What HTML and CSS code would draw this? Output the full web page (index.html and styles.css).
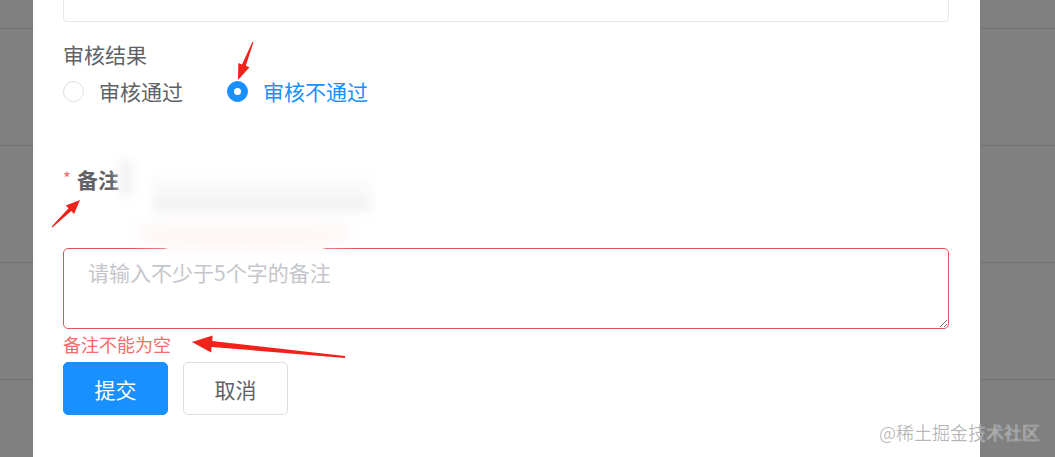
FILE: index.html
```html
<!DOCTYPE html>
<html lang="zh-CN">
<head>
<meta charset="utf-8">
<title>审核</title>
<link rel="stylesheet" href="styles.css">
</head>
<body>
  <div class="table">
    <div class="row row-first"></div>
    <div class="row"></div>
    <div class="row"></div>
    <div class="row"></div>
  </div>

  <div class="dialog">
    <div class="top-box"></div>

    <div class="field-label">审核结果</div>
    <div class="radio-group">
      <label class="radio">
        <span class="radio-dot"></span>
        <span class="radio-text">审核通过</span>
      </label>
      <label class="radio checked">
        <span class="radio-dot"></span>
        <span class="radio-text">审核不通过</span>
      </label>
    </div>

    <div class="remark-label"><span class="required">*</span><span class="remark-text">备注</span></div>

    <textarea class="remark-input" placeholder="请输入不少于5个字的备注"></textarea>
    <div class="error">备注不能为空</div>

    <div class="actions">
      <button class="btn btn-primary">提交</button>
      <button class="btn btn-default">取消</button>
    </div>

    <div class="redact redact-v"></div>
    <div class="redact redact-main"><div class="redact-band"></div></div>
    <div class="redact redact-pink"></div>
    <div class="redact redact-gap"></div>
  </div>

  <svg class="annotations" width="1055" height="457" viewBox="0 0 1055 457">
    <polygon points="253.5,42.2 245.8,65.8 249.5,67.3 238,80 238.3,62.9 242.0,64.4 252.5,41.8"/>
    <polygon points="52.3,227.4 71.3,211.1 74.1,214.0 80,200 65.8,205.4 68.5,208.3 51.7,226.6"/>
    <polygon points="345.1,356.0 212.2,341.0 212.7,335.5 192,342 211.1,352.4 211.6,346.9 344.9,358.0"/>
  </svg>

  <div class="watermark">@稀土掘金技术社区</div>
</body>
</html>
```

FILE: styles.css
```css
html, body {
  margin: 0;
  padding: 0;
}

body {
  width: 1055px;
  height: 457px;
  overflow: hidden;
  position: relative;
  background: #808080;
  font-family: "Noto Sans CJK SC", "Noto Sans", "Liberation Sans", sans-serif;
}

.table {
  display: flex;
  flex-direction: column;
}

.row {
  height: 116px;
  border-bottom: 1px solid #717171;
}

.row-first {
  height: 28px;
}

.dialog {
  position: absolute;
  left: 33px;
  top: 0;
  width: 947px;
  height: 457px;
  box-sizing: border-box;
  padding: 0 31px 0 30px;
  background: #fff;
  overflow: hidden;
}

.top-box {
  height: 60px;
  margin-top: -40px;
  border: 1px solid #e4e7ed;
  border-radius: 4px;
}

.field-label {
  margin-top: 18px;
  font-size: 21px;
  line-height: 28px;
  color: #606266;
}

.radio-group {
  display: flex;
  align-items: center;
  gap: 44px;
  margin-top: 9px;
  height: 28px;
}

.radio {
  display: flex;
  align-items: center;
  gap: 15px;
  font-size: 21px;
  line-height: 28px;
  color: #606266;
}

.radio-dot {
  width: 19px;
  height: 19px;
  border: 1px solid #dcdfe6;
  border-radius: 50%;
  box-sizing: content-box;
  background: #fff;
  display: flex;
  align-items: center;
  justify-content: center;
}

.radio.checked {
  color: #1890ff;
}

.radio.checked .radio-dot {
  background: #1890ff;
  border-color: #1890ff;
}

.radio.checked .radio-dot::after {
  content: "";
  width: 7px;
  height: 7px;
  border-radius: 50%;
  background: #fff;
}

.remark-label {
  margin-top: 60px;
  display: flex;
  align-items: center;
  font-size: 21px;
  line-height: 28px;
  color: #606266;
}

.required {
  color: #f56c6c;
  font-size: 17px;
  margin-right: 6px;
  position: relative;
  top: -1px;
}

.remark-text {
  font-weight: bold;
}

.remark-input {
  display: block;
  margin-top: 55px;
  width: 100%;
  height: 81px;
  box-sizing: border-box;
  padding: 9px 24px;
  border: 1px solid #e2545a;
  border-radius: 5px;
  font-family: inherit;
  font-size: 21px;
  line-height: 28px;
  color: #606266;
  outline: none;
  resize: vertical;
}

.remark-input::placeholder {
  color: #c4c6cb;
}

.error {
  margin-top: 3px;
  font-size: 18px;
  line-height: 24px;
  color: #f56c6c;
}

.actions {
  display: flex;
  gap: 15px;
  margin-top: 6px;
}

.btn {
  width: 105px;
  height: 53px;
  border-radius: 5px;
  font-family: inherit;
  font-size: 21px;
  cursor: pointer;
  padding: 0;
}

.btn-primary {
  background: #1890ff;
  border: 1px solid #1890ff;
  color: #fff;
}

.btn-default {
  background: #fff;
  border: 1px solid #dcdfe6;
  color: #606266;
}

.redact {
  position: absolute;
  filter: blur(5px);
}

.redact-v {
  left: 86px;
  top: 160px;
  width: 14px;
  height: 36px;
  background: #f3f3f3;
}

.redact-main {
  left: 120px;
  top: 178px;
  width: 218px;
  height: 35px;
  background: #fafafa;
}

.redact-band {
  margin-top: 17px;
  height: 16px;
  background: #f3f3f3;
}

.redact-pink {
  left: 105px;
  top: 226px;
  width: 210px;
  height: 22px;
  border-radius: 0 0 50% 50%;
  background: #fef4f4;
  filter: blur(8px);
}

.redact-gap {
  left: 133px;
  top: 245px;
  width: 158px;
  height: 7px;
  background: #fffafa;
  filter: blur(1px);
}

.annotations {
  position: absolute;
  left: 0;
  top: 0;
  pointer-events: none;
}

.annotations polygon {
  fill: #f0231b;
}

.watermark {
  position: absolute;
  right: 15px;
  bottom: 13px;
  font-size: 18px;
  line-height: 24px;
  color: rgba(0, 0, 0, 0.28);
  text-shadow: 0 0 1px rgba(255, 255, 255, 0.9);
}
```
